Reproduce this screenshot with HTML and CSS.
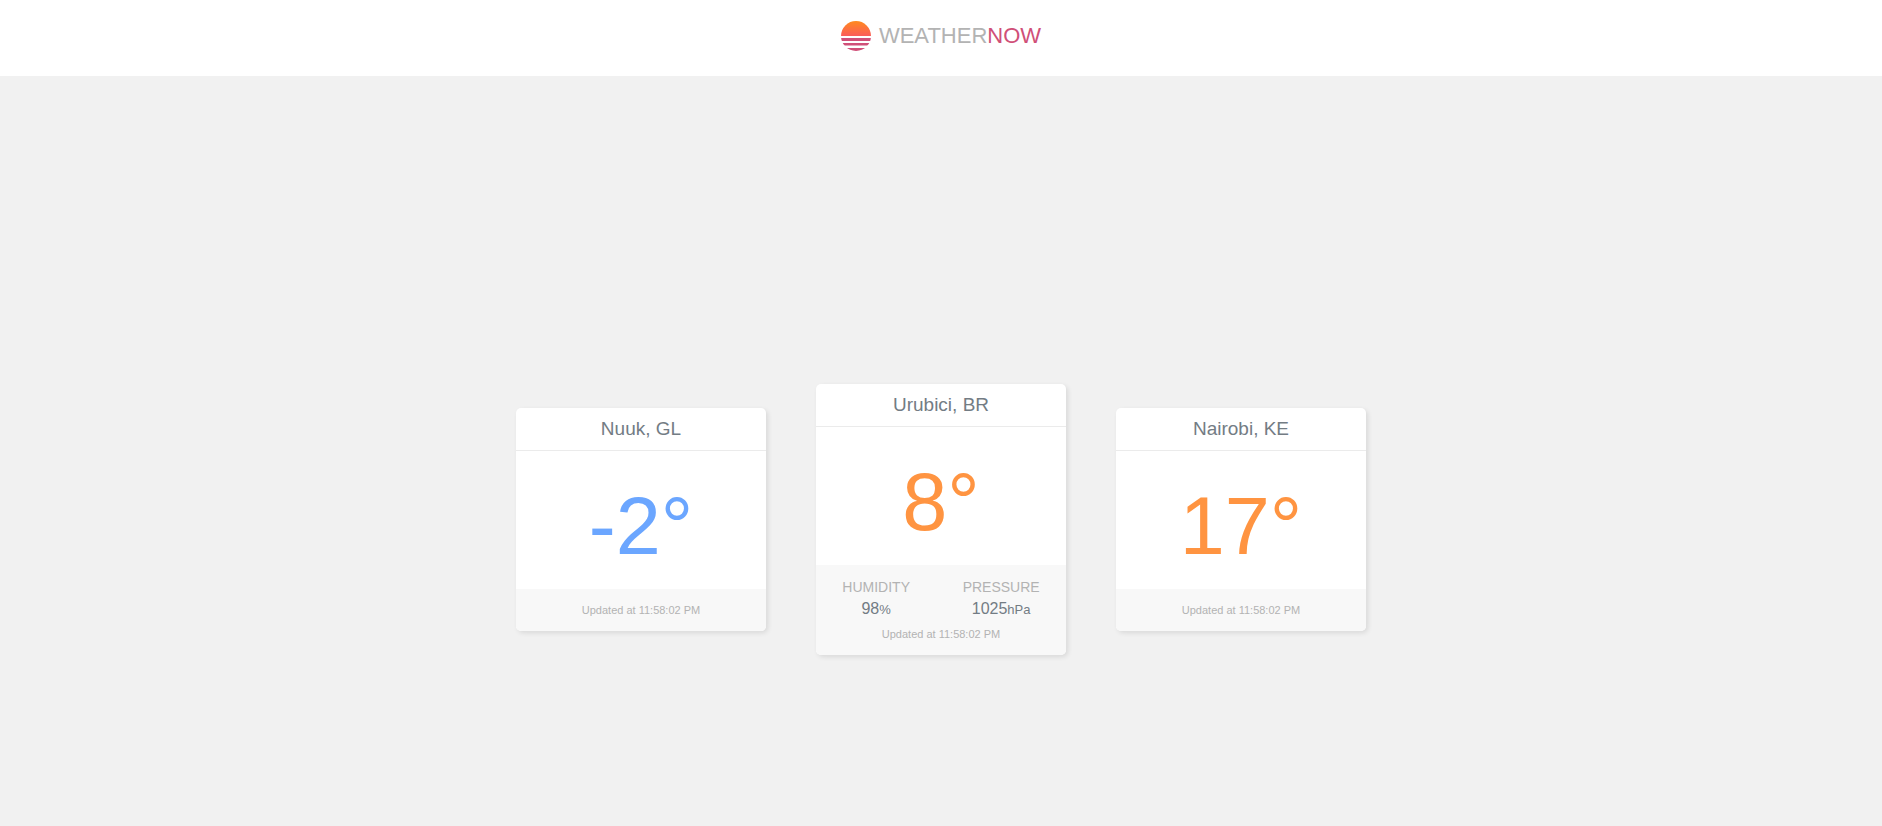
FILE: index.html
```html
<!DOCTYPE html>
<html lang="en">
<head>
<meta charset="utf-8">
<title>WeatherNow</title>
<link rel="stylesheet" href="styles.css">
</head>
<body>
<header class="header">
  <h1 class="logo">
    <svg class="logo-icon" viewBox="0 0 30 30" aria-hidden="true">
      <defs>
        <linearGradient id="sun" x1="0" y1="0" x2="0" y2="1">
          <stop offset="0" stop-color="#ff8a1e"/>
          <stop offset="1" stop-color="#fb5c5a"/>
        </linearGradient>
        <clipPath id="disc"><circle cx="15" cy="15" r="15"/></clipPath>
      </defs>
      <g clip-path="url(#disc)">
        <rect width="30" height="15" fill="url(#sun)"/>
        <path fill="#d04f78" d="M0 17h30v3H0zM0 22h30v2.500H0zM0 27h30v3H0z"/>
      </g>
    </svg>
    <span class="logo-text">WEATHER<span class="logo-accent">NOW</span></span>
  </h1>
</header>
<main class="cards">
  <article class="card">
    <h2 class="card-title">Nuuk, GL</h2>
    <p class="temperature cold">-2°</p>
    <footer class="card-footer">
      <p class="updated">Updated at 11:58:02 PM</p>
    </footer>
  </article>
  <article class="card">
    <h2 class="card-title">Urubici, BR</h2>
    <p class="temperature">8°</p>
    <footer class="card-footer">
      <dl class="details">
        <div class="detail"><dt>HUMIDITY</dt><dd>98<span class="unit">%</span></dd></div>
        <div class="detail"><dt>PRESSURE</dt><dd>1025<span class="unit">hPa</span></dd></div>
      </dl>
      <p class="updated">Updated at 11:58:02 PM</p>
    </footer>
  </article>
  <article class="card">
    <h2 class="card-title">Nairobi, KE</h2>
    <p class="temperature">17°</p>
    <footer class="card-footer">
      <p class="updated">Updated at 11:58:02 PM</p>
    </footer>
  </article>
</main>
</body>
</html>
```

FILE: styles.css
```css
* {
  box-sizing: border-box;
  margin: 0;
  padding: 0;
}

body {
  display: flex;
  flex-direction: column;
  min-height: 100vh;
  background: #f1f1f1;
  color: #737c84;
  font-family: "Liberation Sans", Arial, Helvetica, sans-serif;
}

.header {
  display: flex;
  justify-content: center;
  padding: 21px 20px 25px;
  background: #fff;
}

.logo {
  display: flex;
  align-items: center;
  gap: 8px;
  font-size: 22px;
  font-weight: 400;
  line-height: 30px;
  color: #b3b3b3;
}

.logo-icon {
  width: 30px;
  height: 30px;
}

.logo-accent {
  color: #d04f78;
}

.cards {
  display: flex;
  flex: 1;
  flex-wrap: wrap;
  align-items: center;
  justify-content: center;
  gap: 50px;
  padding-top: 137px;
}

.card {
  width: 250px;
  overflow: hidden;
  border-radius: 5px;
  background: #fff;
  box-shadow: 2px 2px 5px rgba(0, 0, 0, 0.1);
  text-align: center;
}

.card-title {
  border-bottom: 1px solid #ebebeb;
  font-size: 19px;
  font-weight: 400;
  line-height: 42px;
}

.temperature {
  padding: 26px 0 14px;
  font-size: 81px;
  line-height: 98px;
  color: #ff9441;
}

.cold {
  color: #6ba6ff;
}

.card-footer {
  padding: 10px 0;
  background: #f8f8f8;
}

.updated {
  font-size: 11px;
  line-height: 22px;
  color: #b3b3b3;
}

.details {
  display: flex;
  justify-content: space-around;
  padding-bottom: 3px;
}

.detail dt {
  font-size: 14px;
  line-height: 24px;
  color: #b3b3b3;
}

.detail dd {
  font-size: 16px;
  line-height: 20px;
}

.unit {
  font-size: 13px;
}
```
